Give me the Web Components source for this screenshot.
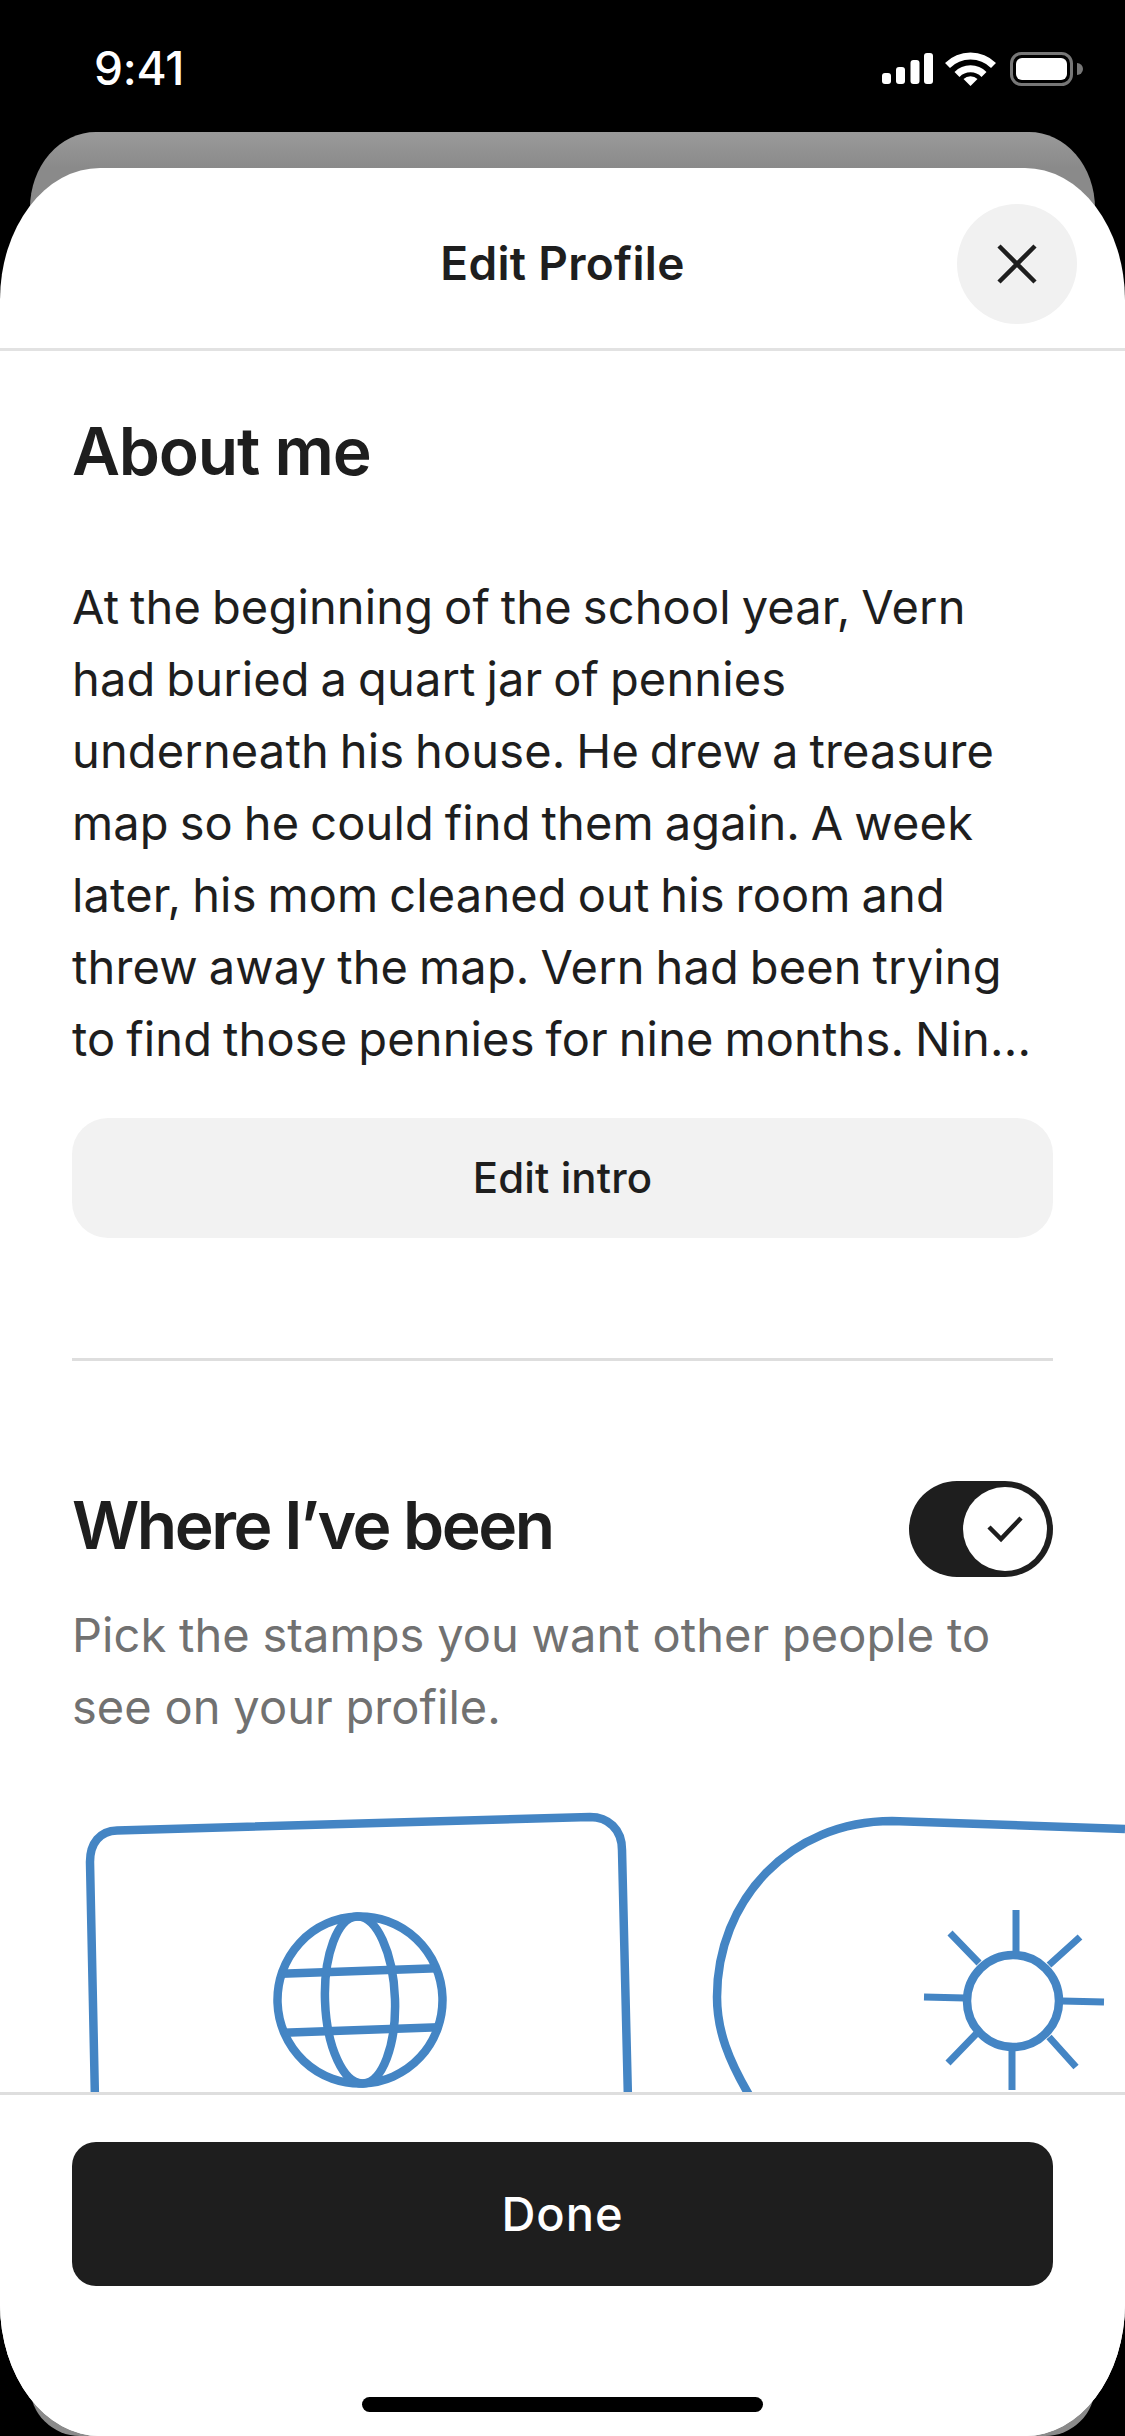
<!DOCTYPE html>
<html><head><meta charset="utf-8">
<style>
html,body{margin:0;padding:0;background:#000;width:1125px;height:2436px;overflow:hidden}
body{font-family:Inter,"Noto Sans",sans-serif;color:#1e1e1e}
</style></head><body>
<phone-frame>
  <status-bar slot="status"></status-bar>
  <modal-sheet slot="sheet">
    <sheet-header slot="header">Edit Profile</sheet-header>
    <about-section>
      <span slot="title">About me</span>
      At the beginning of the school year, Vern<br>had buried a quart jar of pennies<br>underneath his house. He drew a treasure<br>map so he could find them again. A week<br>later, his mom cleaned out his room and<br>threw away the map. Vern had been trying<br>to find those pennies for nine months. Nin...
      <span slot="action">Edit intro</span>
    </about-section>
    <stamps-section>
      <span slot="title">Where I’ve been</span>
      <span slot="desc">Pick the stamps you want other people to<br>see on your profile.</span>
      <toggle-switch slot="toggle"></toggle-switch>
    </stamps-section>
    <sheet-footer slot="footer">Done</sheet-footer>
  </modal-sheet>
</phone-frame>
<script>
function def(name, html){
  customElements.define(name, class extends HTMLElement{
    constructor(){super();this.attachShadow({mode:'open'}).innerHTML=html;}
  });
}
def('phone-frame',`<style>
:host{display:grid;width:1125px;height:2436px;background:#000;grid-template:132px 36px 1fr / 1fr;overflow:hidden}
.status{grid-area:1/1/2/2}
.back{grid-area:2/1/4/2;margin:0 30px;border-radius:66px 66px 50px 50px / 76px 76px 50px 50px;background:linear-gradient(#9a9a9a 0,#8a8a8a 36px,#8a8a8a 100%)}
.sheet{grid-area:3/1/4/2;display:flex;min-height:0}
</style>
<div class="status"><slot name="status"></slot></div>
<div class="back"></div>
<div class="sheet"><slot name="sheet"></slot></div>`);

def('status-bar',`<style>
:host{display:flex;height:132px;align-items:flex-start;justify-content:space-between;color:#fff}
.t{font:500 46px/44px Inter,sans-serif;margin:46px 0 0 94px;letter-spacing:-.2px}
svg{display:block;margin-top:40px;margin-right:33px}
</style><div class="t">9:41</div>
<svg width="210" height="60" viewBox="882 40 210 60" fill="#fff">
<rect x="882" y="73" width="9" height="11" rx="3"/><rect x="896" y="67" width="9" height="17" rx="3"/><rect x="910.5" y="60" width="9" height="24" rx="3"/><rect x="924" y="53" width="9" height="31" rx="3"/>
<g fill="none" stroke="#fff" stroke-width="7"><path d="M947.5 65.5a32.5 32.5 0 0 1 46 0"/><path d="M957 74.5a19 19 0 0 1 27 0"/></g>
<path d="M963.5 79a10 10 0 0 1 14 0L970.5 86z"/>
<rect x="1011.5" y="53.5" width="60" height="31" rx="10" fill="none" stroke="#777" stroke-width="3"/>
<rect x="1016" y="58" width="51" height="22" rx="6"/>
<path d="M1077 63a6 6 0 0 1 0 12z" fill="#777"/>
</svg>`);

def('modal-sheet',`<style>
:host{display:flex;flex-direction:column;flex:1;min-width:0;background:#fff;border-radius:100px/132px;overflow:hidden}
.body{flex:1;min-height:0;overflow:hidden}
</style><slot name="header"></slot><div class="body"><slot></slot></div><slot name="footer"></slot>`);

def('sheet-header',`<style>
:host{display:grid;grid-template-columns:1fr;height:180px;border-bottom:3px solid #e2e2e2;box-sizing:content-box;align-items:center;justify-items:center}
.t,.r{grid-area:1/1}
.t{font:600 46px/56px Inter,sans-serif;letter-spacing:.3px;color:#1e1e1e;margin-top:10px}
.r{justify-self:end;margin:12px 48px 0 0;width:120px;height:120px;border-radius:50%;background:#f1f1f1;display:flex;align-items:center;justify-content:center}
</style><div class="t"><slot></slot></div>
<div class="r"><svg width="40" height="40" viewBox="0 0 40 40" fill="none" stroke="#1e1e1e" stroke-width="4.5"><path d="M2 2 38 38M38 2 2 38"/></svg></div>`);

def('about-section',`<style>
:host{display:block;padding:0 72px;height:1010px;box-sizing:border-box}
h2{margin:0;padding-top:60px;font:600 66px/80px Inter,sans-serif;letter-spacing:-1.2px;color:#1e1e1e}
p{margin:0;padding-top:80px;font:400 47px/72px Inter,sans-serif;letter-spacing:.15px;word-spacing:-2.5px;color:#1e1e1e;white-space:nowrap}
.b{margin-top:43px;height:120px;border-radius:36px;background:#f2f2f2;display:flex;align-items:center;justify-content:center;font:500 42px/50px Inter,sans-serif;letter-spacing:.1px}
hr{border:0;height:3px;background:#dedede;margin:120px 0 0}
</style><h2><slot name="title"></slot></h2><p><slot></slot></p><div class="b"><slot name="action"></slot></div><hr>`);

def('toggle-switch',`<style>
:host{display:flex;width:144px;height:96px;border-radius:48px;background:#1e1e1e;justify-content:flex-end;align-items:center;padding:6px;box-sizing:border-box}
.k{width:84px;height:84px;border-radius:50%;background:#fff;display:flex;align-items:center;justify-content:center}
</style><div class="k"><svg width="36" height="28" viewBox="0 0 36 28" fill="none" stroke="#1e1e1e" stroke-width="4.5"><path d="M2 12 14 24 34 3"/></svg></div>`);

def('stamps-section',`<style>
:host{display:block}
.top{padding:0 72px;display:flex;justify-content:space-between;align-items:center;margin-top:120px;height:96px}
h2{margin:-9px 0 0;font:600 66px/80px Inter,sans-serif;letter-spacing:-2.5px;color:#1e1e1e}
p{margin:0;padding:22px 72px 0;font:400 47px/72px Inter,sans-serif;letter-spacing:.05px;word-spacing:-.5px;color:#717171;white-space:nowrap}
svg{display:block;margin-top:69px}
</style><div class="top"><h2><slot name="title"></slot></h2><slot name="toggle"></slot></div>
<p><slot name="desc"></slot></p>
<svg width="1125" height="290" viewBox="0 1812 1125 290" fill="none" stroke="#4485c4" stroke-width="8.5">
<path d="M95 2100 90 1862C90 1843 100 1831 117 1830.5L590 1817C608 1817 622 1829 622 1850L628 2100"/>
<g transform="rotate(-2 360 2000)"><ellipse cx="360" cy="2000" rx="82.500" ry="83.500"/><ellipse cx="360" cy="2000" rx="35" ry="83.500"/><path d="M282 1971H438M282 2030H438"/></g>
<path d="M752 2100C728 2060 717 2030 717 1997C717 1900 790 1821 892 1821L1125 1829"/>
<circle cx="1013" cy="2001" r="46"/>
<path d="M1016 1910V1952M1012 2090V2050M924 1997 965 1998M1062 2001 1104 2002M950 1933 979 1963M1080 1937 1049 1965M948 2063 976 2034M1076 2067 1049 2037" stroke-width="7"/>
</svg>`);

def('sheet-footer',`<style>
:host{display:flex;flex-direction:column;height:344px;box-sizing:border-box;border-top:3px solid #dedede;background:#fff;padding:47px 72px 0;flex:none}
.b{height:144px;border-radius:24px;background:#1e1e1e;color:#fff;display:flex;align-items:center;justify-content:center;font:500 47px/56px Inter,sans-serif;letter-spacing:1px}
.h{align-self:center;width:401px;height:15px;border-radius:8px;background:#000;margin-top:111px}
</style><div class="b"><slot></slot></div><div class="h"></div>`);
</script>
</body></html>
